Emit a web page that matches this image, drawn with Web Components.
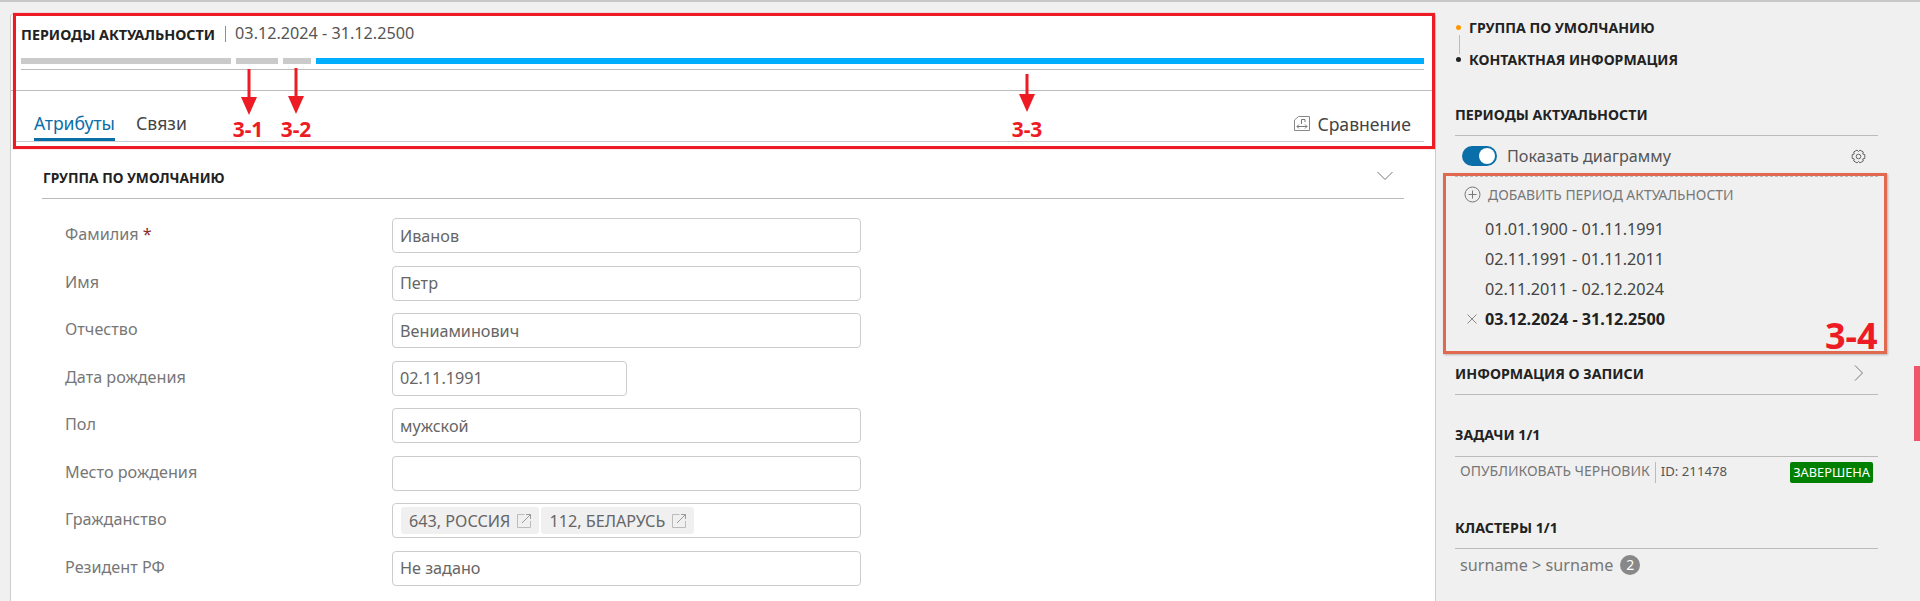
<!DOCTYPE html>
<html lang="ru">
<head>
<meta charset="utf-8">
<title>Периоды актуальности</title>
<style>
  html, body { margin: 0; height: 601px; overflow: hidden; background: #f0f0f0; }
  body { font-family: "Noto Sans", "Open Sans", sans-serif; color: #222; }
</style>
</head>
<body>
<record-page></record-page>

<script>
const CHEVRON = (d) => `<svg width="16" height="16" viewBox="0 0 16 16" fill="none" stroke="#777" stroke-width="1"><path d="${d}"/></svg>`;

// six tooth cog for the diagram settings button
const cogPath = () => {
  let d = '';
  for (let i = 0; i < 6; i++) {
    const a = i * Math.PI / 3;
    [[-0.52, 4.9], [-0.3, 6.6], [0.3, 6.6], [0.52, 4.9]].forEach(([o, r], j) => {
      const x = 7.5 + r * Math.cos(a + o), y = 7.5 + r * Math.sin(a + o);
      d += `${i === 0 && j === 0 ? 'M' : 'L'}${x.toFixed(2)} ${y.toFixed(2)}`;
    });
  }
  return d + 'z';
};

class PeriodHeader extends HTMLElement {
  connectedCallback() {
    this.attachShadow({ mode: 'open' });
    this.shadowRoot.innerHTML = `
      <style>
        :host { display: block; padding: 0 11px 0 10px; }
        .title { height: 40px; display: flex; align-items: center; }
        b { font-weight: 700; color: #222; font-size: 14.3px; }
        .sep { width: 1px; height: 16px; background: #a08a70; margin: 0 9px 0 10px; }
        .date { color: #555; font-size: 16.2px; position: relative; top: -1px; }
        .bars { display: flex; gap: 5px; margin-top: 4px; height: 6px; }
        .bars i { background: #cacaca; display: block; }
        .bars i:last-child { background: #00aeff; flex: 1; }
        .line { height: 1px; background: #bbb; margin-top: 5px; }
      </style>
      <div class="title"><b>ПЕРИОДЫ АКТУАЛЬНОСТИ</b><span class="sep"></span><span class="date">03.12.2024 - 31.12.2500</span></div>
      <div class="bars"><i style="width:210px"></i><i style="width:42px"></i><i style="width:28px"></i><i></i></div>
      <div class="line"></div>
    `;
  }
}
customElements.define('period-header', PeriodHeader);

class TabBar extends HTMLElement {
  connectedCallback() {
    this.attachShadow({ mode: 'open' });
    this.shadowRoot.innerHTML = `
      <style>
        :host { display: flex; height: 52px; margin: 20px 11px 0 3px; box-sizing: border-box; align-items: flex-end; padding: 0 13px 0 20px; border-bottom: 1px solid #ccc; position: relative; font-size: 17.6px; }
        .top { position: absolute; left: -3px; right: -11px; top: 0; height: 1px; background: #bbb; }
        .tab { height: 35px; line-height: 34px; box-sizing: border-box; margin-right: 21px; color: #444; }
        .tab.on { color: #0a6ea8; border-bottom: 3px solid #0a6ea8; }
        .cmp { margin-left: auto; display: flex; align-items: center; gap: 7px; height: 35px; color: #444; }
      </style>
      <span class="top"></span>
      <span class="tab on">Атрибуты</span>
      <span class="tab">Связи</span>
      <span class="cmp">
        <svg width="16" height="15" viewBox="0 0 16 15" fill="none" stroke="#888" stroke-width="1"><path d="M4.5.5h11v14H.5V4z"/><path d="M3 10.5h10M3 10.5l2-2M3 10.5l2 2M13 10.5l-2-2M13 10.5l-2 2M7.5 8V3.5h3.5V6" stroke="#777"/></svg>
        Сравнение
      </span>
    `;
  }
}
customElements.define('tab-bar', TabBar);

class FormGroup extends HTMLElement {
  connectedCallback() {
    this.attachShadow({ mode: 'open' });
    this.shadowRoot.innerHTML = `
      <style>
        :host { display: block; padding: 0 31px; }
        header { height: 56px; border-bottom: 1px solid #bbb; display: flex; align-items: flex-end; justify-content: space-between; }
        header b { font-size: 13.8px; font-weight: 700; color: #222; margin: 0 0 11px 1px; }
        header svg { margin: 0 11px 14px 0; }
        .rows { padding-top: 19px; }
      </style>
      <header><b>${this.getAttribute('title')}</b>${CHEVRON('M.5 4l7.5 7.5L15.5 4')}</header>
      <div class="rows"><slot></slot></div>
    `;
  }
}
customElements.define('form-group', FormGroup);

class FormRow extends HTMLElement {
  connectedCallback() {
    const req = this.hasAttribute('required') ? ' <span style="color:#8b2a2a">*</span>' : '';
    this.attachShadow({ mode: 'open' });
    this.shadowRoot.innerHTML = `
      <style>
        :host { display: flex; height: 47.57px; font-size: 16.2px; }
        label { width: 327px; padding-left: 23px; color: #777; line-height: 33px; flex: none; }
        .box { height: 35px; box-sizing: border-box; width: ${this.getAttribute('width') || 469}px; border: 1px solid #ccc; border-radius: 4px; background: #fff; padding: 0 7px; display: flex; align-items: center; gap: 2px; color: #666; }
      </style>
      <label>${this.getAttribute('label')}${req}</label>
      <div class="box"><slot></slot></div>
    `;
  }
}
customElements.define('form-row', FormRow);

class RefChip extends HTMLElement {
  connectedCallback() {
    this.attachShadow({ mode: 'open' });
    this.shadowRoot.innerHTML = `
      <style>
        :host { display: inline-flex; align-items: center; gap: 7px; height: 27px; padding: 0 8px; background: #f0f0f0; border-radius: 3px; color: #666; white-space: nowrap; font-size: 16.2px; }
        :host(:first-child) { margin-left: 1px; }
      </style>
      <slot></slot>
      <svg width="14" height="14" viewBox="0 0 14 14" fill="none" stroke-width="1"><path d="M7.5.5h-7v13h13V7" stroke="#bbb"/><path d="M5 9l8.5-8.5M9 .5h4.5V5" stroke="#999"/></svg>
    `;
  }
}
customElements.define('ref-chip', RefChip);

class SideNav extends HTMLElement {
  connectedCallback() {
    this.attachShadow({ mode: 'open' });
    this.shadowRoot.innerHTML = `
      <style>
        :host { display: block; padding: 15px 0 0 21px; font-size: 14.1px; font-weight: 700; color: #222; height: 60px; position: relative; }
        div { display: flex; align-items: center; gap: 8px; height: 20px; }
        div + div { margin-top: 12px; }
        i { width: 5px; height: 5px; border-radius: 50%; background: #222; display: block; }
        .on i { background: #ff9800; }
        .v { position: absolute; left: 24px; top: 33px; width: 1px; height: 19px; background: #bbb; }
      </style>
      <span class="v"></span>
      <div class="on"><i></i>ГРУППА ПО УМОЛЧАНИЮ</div>
      <div><i></i>КОНТАКТНАЯ ИНФОРМАЦИЯ</div>
    `;
  }
}
customElements.define('side-nav', SideNav);

class SideSection extends HTMLElement {
  connectedCallback() {
    const open = this.getAttribute('chevron');
    this.attachShadow({ mode: 'open' });
    this.shadowRoot.innerHTML = `
      <style>
        :host { display: block; margin: 0 42px 0 20px; }
        h3 { margin: 0; padding-top: 1px; height: ${this.getAttribute('head') || 32}px; box-sizing: border-box; border-bottom: 1px solid #bbb; display: flex; justify-content: space-between; align-items: flex-start; font-size: 14.2px; line-height: 20px; font-weight: 700; color: #222; }
        svg { margin: 1px 11px 0 0; }
      </style>
      <h3>${this.getAttribute('title')}${open ? CHEVRON('M4 .5l7.5 7.5L4 15.5') : ''}</h3>
      <slot></slot>
    `;
  }
}
customElements.define('side-section', SideSection);

class DiagramToggle extends HTMLElement {
  connectedCallback() {
    this.attachShadow({ mode: 'open' });
    this.shadowRoot.innerHTML = `
      <style>
        :host { display: flex; align-items: center; height: 40px; padding: 0 12px 0 7px; font-size: 16.2px; color: #555; }
        .sw { width: 35px; height: 20px; border-radius: 10px; background: #0a6ea8; position: relative; margin-right: 10px; }
        .sw::after { content: ''; position: absolute; right: 2px; top: 2px; width: 16px; height: 16px; border-radius: 50%; background: #fff; }
        svg { margin-left: auto; }
      </style>
      <span class="sw"></span>Показать диаграмму
      <svg width="15" height="15" viewBox="0 0 15 15" fill="none" stroke="#666" stroke-width="1"><path d="${cogPath()}"/><circle cx="7.5" cy="7.5" r="2.3"/></svg>
    `;
  }
}
customElements.define('diagram-toggle', DiagramToggle);

class PeriodList extends HTMLElement {
  connectedCallback() {
    this.attachShadow({ mode: 'open' });
    this.shadowRoot.innerHTML = `
      <style>
        :host { display: block; border-top: 1px dashed #bbb; height: 187px; box-sizing: border-box; }
        .add { display: flex; align-items: center; height: 35px; box-sizing: border-box; padding-left: 9px; font-size: 13.9px; color: #777; gap: 7px; margin-bottom: 2px; }
        .p { height: 30px; line-height: 30px; padding-left: 30px; font-size: 16.2px; color: #444; position: relative; }
        .p.on { font-weight: 700; color: #222; }
        .p svg { position: absolute; left: 12px; top: 10px; }
      </style>
      <div class="add">
        <svg width="17" height="17" viewBox="0 0 17 17" fill="none" stroke="#777" stroke-width="1"><circle cx="8.5" cy="8.5" r="7.5"/><path d="M8.5 4.5v8M4.5 8.5h8"/></svg>
        ДОБАВИТЬ ПЕРИОД АКТУАЛЬНОСТИ
      </div>
      <div class="p">01.01.1900 - 01.11.1991</div>
      <div class="p">02.11.1991 - 01.11.2011</div>
      <div class="p">02.11.2011 - 02.12.2024</div>
      <div class="p on"><svg width="10" height="10" viewBox="0 0 10 10" stroke="#888" stroke-width="1"><path d="M.5.5l9 9M9.5.5l-9 9"/></svg>03.12.2024 - 31.12.2500</div>
    `;
  }
}
customElements.define('period-list', PeriodList);

class TaskRow extends HTMLElement {
  connectedCallback() {
    this.attachShadow({ mode: 'open' });
    this.shadowRoot.innerHTML = `
      <style>
        :host { display: flex; align-items: center; height: 21px; margin-top: 5px; padding: 0 5px; font-size: 14px; color: #777; }
        .id { border-left: 1px solid #bbb; height: 21px; line-height: 18px; margin-left: 5px; padding-left: 5px; color: #555; font-size: 13.2px; }
        .tag { margin-left: auto; background: #008000; color: #fff; border-radius: 2px; height: 21px; line-height: 21px; padding: 0 3px; font-size: 12.8px; }
        .n { line-height: 18px; align-self: flex-start; white-space: nowrap; }
      </style>
      <span class="n">ОПУБЛИКОВАТЬ ЧЕРНОВИК</span><span class="id">ID: 211478</span><span class="tag">ЗАВЕРШЕНА</span>
    `;
  }
}
customElements.define('task-row', TaskRow);

class ClusterRow extends HTMLElement {
  connectedCallback() {
    this.attachShadow({ mode: 'open' });
    this.shadowRoot.innerHTML = `
      <style>
        :host { display: flex; align-items: center; height: 20px; margin-top: 6px; padding: 0 5px; font-size: 16.2px; color: #777; gap: 7px; }
        i { font-style: normal; width: 20px; height: 20px; border-radius: 50%; background: #888; color: #fff; text-align: center; line-height: 20px; font-size: 14px; }
      </style>
      surname &gt; surname <i>2</i>
    `;
  }
}
customElements.define('cluster-row', ClusterRow);

// red callouts drawn on top of the screenshot
class AnnotationLayer extends HTMLElement {
  connectedCallback() {
    const arrow = (x, y1, y2) => {
      const h = y2 - y1;
      return `<svg class="a" style="left:${x - 8}px;top:${y1}px" width="16" height="${h}"><path d="M6.5 0h3V${h - 18}H16L8 ${h}L0 ${h - 18}H6.5z" fill="#ed1c24"/></svg>`;
    };
    const tag = (x, t) => `<span class="t" style="left:${x}px">${t}</span>`;
    this.attachShadow({ mode: 'open' });
    this.shadowRoot.innerHTML = `
      <style>
        :host { display: block; position: absolute; inset: 0; pointer-events: none; }
        .red { position: absolute; left: 13px; top: 13px; width: 1422px; height: 136px; box-sizing: border-box; border: 3px solid #ed1c24; box-shadow: 0 0 1px rgba(237,28,36,.6); }
        .org { position: absolute; left: 1443px; top: 173px; width: 444px; height: 181px; box-sizing: border-box; border: 3px solid #e0694f; box-shadow: 1px 1px 2px rgba(0,0,0,.25); }
        .a { position: absolute; }
        .t { position: absolute; top: 114px; width: 60px; margin-left: -30px; text-align: center; color: #ed1c24; font-weight: 700; font-size: 21px; line-height: 30px; }
        .big { position: absolute; left: 1825px; top: 314px; color: #ed1c24; font-weight: 700; font-size: 36px; line-height: 44px; }
      </style>
      <div class="red"></div>
      <div class="org"></div>
      ${arrow(249, 69, 115)}${arrow(296, 68, 114)}${arrow(1027, 74, 112)}
      ${tag(248, '3-1')}${tag(296, '3-2')}${tag(1027, '3-3')}
      <span class="big">3-4</span>
    `;
  }
}
customElements.define('annotation-layer', AnnotationLayer);

class RecordPage extends HTMLElement {
  connectedCallback() {
    this.attachShadow({ mode: 'open' });
    this.shadowRoot.innerHTML = `
      <style>
        :host { display: block; position: relative; width: 1920px; height: 601px; overflow: hidden; font-family: "Noto Sans", "Open Sans", sans-serif; }
        .top { height: 2px; background: #c8c8c8; }
        .main { display: flex; height: 599px; }
        .card { width: 1424px; margin: 12px 0 0 11px; background: #fff; box-shadow: -1px 0 0 #ccc, 1px 0 0 #ccc; border-radius: 3px 3px 0 0; overflow: hidden; flex: none; }
        aside { flex: 1; min-width: 0; }
        .scroll { position: absolute; right: 0; top: 366px; width: 6px; height: 75px; background: #f0566a; }
      </style>
      <div class="top"></div>
      <div class="main">
        <div class="card">
          <period-header></period-header>
          <tab-bar></tab-bar>
          <form-group title="ГРУППА ПО УМОЛЧАНИЮ">
            <form-row label="Фамилия" required>Иванов</form-row>
            <form-row label="Имя">Петр</form-row>
            <form-row label="Отчество">Вениаминович</form-row>
            <form-row label="Дата рождения" width="235">02.11.1991</form-row>
            <form-row label="Пол">мужской</form-row>
            <form-row label="Место рождения"></form-row>
            <form-row label="Гражданство"><ref-chip>643, РОССИЯ</ref-chip><ref-chip>112, БЕЛАРУСЬ</ref-chip></form-row>
            <form-row label="Резидент РФ">Не задано</form-row>
          </form-group>
        </div>
        <aside>
          <side-nav></side-nav>
          <div style="height:27px"></div>
          <side-section title="ПЕРИОДЫ АКТУАЛЬНОСТИ">
            <diagram-toggle></diagram-toggle>
            <period-list></period-list>
          </side-section>
          <side-section title="ИНФОРМАЦИЯ О ЗАПИСИ" chevron="1"></side-section>
          <div style="height:29px"></div>
          <side-section title="ЗАДАЧИ 1/1" head="33"><task-row></task-row></side-section>
          <div style="height:34px"></div>
          <side-section title="КЛАСТЕРЫ 1/1"><cluster-row></cluster-row></side-section>
        </aside>
      </div>
      <div class="scroll"></div>
      <annotation-layer></annotation-layer>
    `;
  }
}
customElements.define('record-page', RecordPage);
</script>
</body>
</html>
